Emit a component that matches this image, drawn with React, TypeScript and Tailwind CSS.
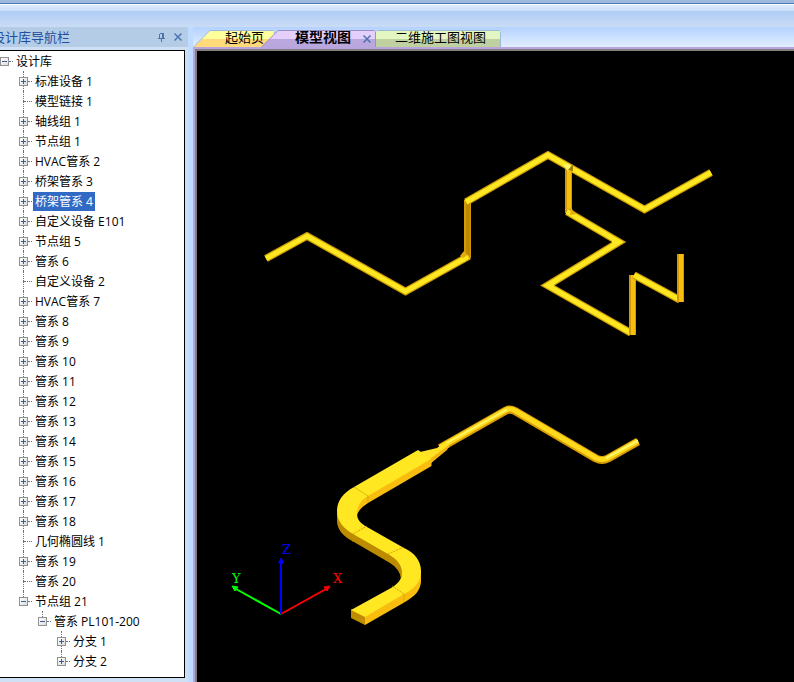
import { useState } from "react";
import { clsx } from "clsx";

interface TreeNode {
  label: string;
  expandable?: boolean;
  children?: TreeNode[];
}

const TREE: TreeNode = {
  label: "设计库",
  children: [
    { label: "标准设备 1", expandable: true },
    { label: "模型链接 1" },
    { label: "轴线组 1", expandable: true },
    { label: "节点组 1", expandable: true },
    { label: "HVAC管系 2", expandable: true },
    { label: "桥架管系 3", expandable: true },
    { label: "桥架管系 4", expandable: true },
    { label: "自定义设备 E101", expandable: true },
    { label: "节点组 5", expandable: true },
    { label: "管系 6", expandable: true },
    { label: "自定义设备 2" },
    { label: "HVAC管系 7", expandable: true },
    { label: "管系 8", expandable: true },
    { label: "管系 9", expandable: true },
    { label: "管系 10", expandable: true },
    { label: "管系 11", expandable: true },
    { label: "管系 12", expandable: true },
    { label: "管系 13", expandable: true },
    { label: "管系 14", expandable: true },
    { label: "管系 15", expandable: true },
    { label: "管系 16", expandable: true },
    { label: "管系 17", expandable: true },
    { label: "管系 18", expandable: true },
    { label: "几何椭圆线 1" },
    { label: "管系 19", expandable: true },
    { label: "管系 20" },
    {
      label: "节点组 21",
      children: [
        {
          label: "管系 PL101-200",
          children: [
            { label: "分支 1", expandable: true },
            { label: "分支 2", expandable: true },
          ],
        },
      ],
    },
  ],
};

interface TreeItemProps {
  node: TreeNode;
  root?: boolean;
  last?: boolean;
  selected: string;
  onSelect: (label: string) => void;
}

const TreeItem = ({ node, root = false, last = false, selected, onSelect }: TreeItemProps) => {
  const [open, setOpen] = useState(Boolean(node.children));
  const hasToggle = Boolean(node.children || node.expandable);
  const isSelected = selected === node.label;

  return (
    <li role="treeitem" aria-expanded={hasToggle ? open : undefined} aria-selected={isSelected}>
      <div className="flex h-5 items-center">
        <div className="flex h-5 w-[9px] shrink-0 flex-col items-center">
          <span className={clsx("w-px flex-1 border-l border-dotted", root ? "border-transparent" : "border-gray-500")} />
          {hasToggle && (
            <button
              type="button"
              aria-label={open ? "折叠" : "展开"}
              onClick={() => setOpen(!open)}
              className="flex size-[9px] shrink-0 items-center justify-center border border-[#919191] bg-gradient-to-br from-white to-[#dcdcdc]"
            >
              <svg viewBox="0 0 5 5" className="size-[5px] fill-[#3c5a9c]" shapeRendering="crispEdges">
                <path d={open ? "M0 2h5v1H0z" : "M0 2h5v1H0zM2 0h1v5H2z"} />
              </svg>
            </button>
          )}
          <span
            className={clsx("w-px flex-1 border-l border-dotted", root || last ? "border-transparent" : "border-gray-500")}
          />
        </div>
        <span className={clsx("border-t border-dotted border-gray-500", hasToggle ? "w-1" : "-ml-1 w-2")} />
        <button
          type="button"
          onClick={() => onSelect(node.label)}
          className={clsx("ml-px h-[19px] px-0.5 text-xs leading-[19px] whitespace-nowrap", isSelected ? "bg-[#316ac5] text-white" : "text-black")}
        >
          {node.label}
        </button>
      </div>
      {open && node.children && (
        <ul role="group" className="pl-[19px]">
          {node.children.map((child, i) => (
            <TreeItem
              key={child.label}
              node={child}
              last={i === node.children!.length - 1}
              selected={selected}
              onSelect={onSelect}
            />
          ))}
        </ul>
      )}
    </li>
  );
};

const CloseIcon = () => (
  <svg viewBox="0 0 8 8" className="size-2 stroke-[#4a74b0]" fill="none" strokeWidth="1.5">
    <path d="M0.5 0.5l7 7M7.5 0.5l-7 7" />
  </svg>
);

const LibraryPanel = () => {
  const [selected, setSelected] = useState("桥架管系 4");

  return (
    <aside className="flex w-[188px] shrink-0 flex-col overflow-hidden bg-[#cfe0f5]">
      <header className="flex h-5 items-center bg-[#b5cce7] pr-1.5">
        <h2 className="-ml-2 flex-1 text-[13px] leading-5 whitespace-nowrap text-[#1f4f9f]">设计库导航栏</h2>
        <button type="button" aria-label="固定" className="mr-2">
          <svg viewBox="0 0 8 9" className="h-[9px] w-2" fill="none" stroke="#4a74b0" shapeRendering="crispEdges">
            <path d="M1.5 0.5h4v5M1.5 0.5v5M4.5 0.5v5M0 5.5h7M3.5 6v3" />
          </svg>
        </button>
        <button type="button" aria-label="关闭">
          <CloseIcon />
        </button>
      </header>
      <div className="mt-[3px] mr-[3px] mb-1 flex-1 border-y border-r border-black bg-white">
        <ul role="tree" aria-label="设计库导航栏">
          <TreeItem node={TREE} root selected={selected} onSelect={setSelected} />
        </ul>
      </div>
    </aside>
  );
};

const DocumentTabs = () => (
  <nav className="flex h-5 items-end bg-gradient-to-b from-[#b4d2fe] to-[#e2eeff] text-[13px] leading-3 text-black">
    <button
      type="button"
      className="h-[17px] w-[82px] bg-[#9dbbe0] pt-px pr-px [clip-path:polygon(0_100%,17px_0,80px_0,100%_2px,100%_100%)]"
    >
      <span className="block h-4 bg-gradient-to-b from-[#ffff9c] from-50% to-[#ffd97a] to-50% pl-8 text-left [clip-path:polygon(1px_100%,17px_0,100%_0,100%_100%)]">
        起始页
      </span>
    </button>
    <div className="-ml-3.5 h-[17px] w-[115px] bg-[#9b8fc8] pt-px pr-px [clip-path:polygon(0_100%,17px_0,113px_0,100%_2px,100%_100%)]">
      <div className="flex h-4 items-start bg-gradient-to-b from-[#e5d0fd] from-50% to-[#baa7dd] to-50% pl-[34px] [clip-path:polygon(1px_100%,17px_0,100%_0,100%_100%)]">
        <button type="button" className="text-sm leading-3 font-bold">
          模型视图
        </button>
        <button type="button" aria-label="关闭" className="mt-1 ml-3">
          <CloseIcon />
        </button>
      </div>
    </div>
    <button
      type="button"
      className="h-[17px] w-[125px] bg-[#9dbbd0] pt-px pr-px [clip-path:polygon(0_2px,2px_0,123px_0,100%_2px,100%_100%,0_100%)]"
    >
      <span className="block h-4 bg-gradient-to-b from-[#e3f6c2] from-50% to-[#bfd1a0] to-50% pl-[19px] text-left">
        二维施工图视图
      </span>
    </button>
  </nav>
);

/* Flat cable tray run: dark side walls with a bright deck between them */
const Tray = ({ d }: { d: string }) => (
  <g fill="none" strokeLinejoin="miter">
    <path d={d} stroke="#cf9f06" strokeWidth="7.5" />
    <path d={d} stroke="#ffe722" strokeWidth="5" />
  </g>
);

const Riser = ({ x, y, height, face }: { x: number; y: number; height: number; face: string }) => (
  <g>
    <rect x={x} y={y} width="7" height={height} fill="#d29a06" />
    <rect x={x + 2} y={y} width="4" height={height} fill={face} />
  </g>
);

const ModelScene = () => (
  <svg viewBox="197 51 597 631" className="block h-auto w-full" role="img" aria-label="三维管系模型">
    {/* upper tray network */}
    <Tray d="M266 258.5L307 236L405.5 291.500L469 256" />
    <Riser x={464} y={200} height={58} face="#bd8b00" />
    <path d="M464 251l-4 5 6 4 4-2z" fill="#e5ad0c" />
    <path d="M461 259l7-4 1 3-5 4z" fill="#ffe722" />
    <Tray d="M466 202L548 155L644.5 209.5L711 172.5" />
    <Riser x={565} y={168} height={45} face="#f9bd10" />
    <Tray d="M567 211.500L619 242L547.500 285.500L631 333" />
    <path d="M571 208l5 6-6 1z" fill="#e5ad0c" />
    <path d="M612 238l7 4-7 4zM554 281l-7 4 7 5z" fill="#ffe722" />
    <Riser x={629} y={275} height={60} face="#f9bd10" />
    <Tray d="M634 275L680 300" />
    <Riser x={677} y={254} height={48} face="#f9bd10" />
    <path d="M563 165l6-1 4 4-5 3z" fill="#fff56a" />
    <path d="M568 170l5-6v7z" fill="#a87b00" />

    {/* round pipe */}
    <g fill="none" strokeLinejoin="round">
      <path d="M440 448L506 410.500Q510 408.500 515 411L596 458.500Q602 461.500 608 458.500L638 441.500" stroke="#d99d05" strokeWidth="8" />
      <path d="M440 447.500L506 410Q510 408 515 410.500L596 458Q602 461 608 458L638 441" stroke="#ffd91c" strokeWidth="5" />
      <path d="M442 445.500L507 409.500M606 458L638 440.500" stroke="#fff768" strokeWidth="2" />
    </g>

    {/* reducer */}
    <path d="M420 452L437 448L446 441L449 447L431 463z" fill="#ffe126" />
    <path d="M430 459L449 445L447 450L431 463z" fill="#f2b30d" />

    {/* rectangular duct, side faces below the deck */}
    <path d="M431.500 458V466L368 503Q357 510 357 517L353 508L366 495z" fill="#f9bd10" />
    <path d="M337 512V522C338 531 344 537 354 542L390 563Q400 569 401 579L404 568L390 552L353 532z" fill="#bd8b00" />
    <path d="M421 570V582C420 591 415 596 405 602L365 625V615L403 592z" fill="#f9bd10" />
    <path d="M351 609V618L365 625V615z" fill="#c08c00" />
    <path
      d="M418 450L354 487C343 493 337 501 337 511C337 521 343 528 353 534L388 554C397 559 402 565 402 573C402 579 398 584 391 588L351 610L365 617L404 594C416 588 421 581 421 571C421 561 415 553 404 548L367 527C360 523 357 519 357 514C357 506 361 500 368 496L431 459z"
      fill="#ffe722"
    />
    <path
      d="M354 487L368 496V503M353 534L367 526M388 554L404 547M392 586L404 594V602M353 534V542"
      fill="none"
      stroke="#b98b00"
      strokeWidth="1"
      strokeDasharray="2 1"
      opacity="0.7"
    />

    {/* axis tripod */}
    <g strokeWidth="2">
      <path d="M281 614L326 589" stroke="#f00" />
      <path d="M281 614L236 589" stroke="#0f0" />
      <path d="M281 614V562" stroke="#00f" />
    </g>
    <path d="M330 586L324 587L327 591z" fill="#f00" stroke="#f00" />
    <path d="M232 586L238 587L235 591z" fill="#0f0" stroke="#0f0" />
    <path d="M281 558L278.500 563H283.500z" fill="#00f" stroke="#00f" />
    <g className="font-['DejaVu_Serif',serif] text-[13px]">
      <text x="333" y="583" fill="#f00">X</text>
      <text x="232" y="583" fill="#0f0">Y</text>
      <text x="282" y="554" fill="#00f">Z</text>
    </g>
  </svg>
);

const App = () => {
  return (
    <div className="flex min-h-screen flex-col bg-[#bfdbff] font-['Open_Sans','Noto_Sans_CJK_SC',sans-serif]">
      <div>
        <div className="h-[3px] bg-[#9db9de]" />
        <div className="h-px bg-[#4b79b3]" />
        <div className="h-px bg-white" />
        <div className="h-1.5 bg-gradient-to-b from-[#dce9fb] to-[#c9def9]" />
        <div className="h-4 bg-gradient-to-b from-[#afcdf4] to-[#cadcf5]" />
      </div>
      <div className="flex flex-1">
        <LibraryPanel />
        <main className="ml-[5px] flex min-w-0 flex-1 flex-col">
          <DocumentTabs />
          <div className="flex-1 border-t-2 border-l-2 border-[#b9a5dd] bg-[#808080] pt-0.5 pl-0.5">
            <div className="h-full bg-black">
              <ModelScene />
            </div>
          </div>
        </main>
      </div>
    </div>
  );
};

export default App;
